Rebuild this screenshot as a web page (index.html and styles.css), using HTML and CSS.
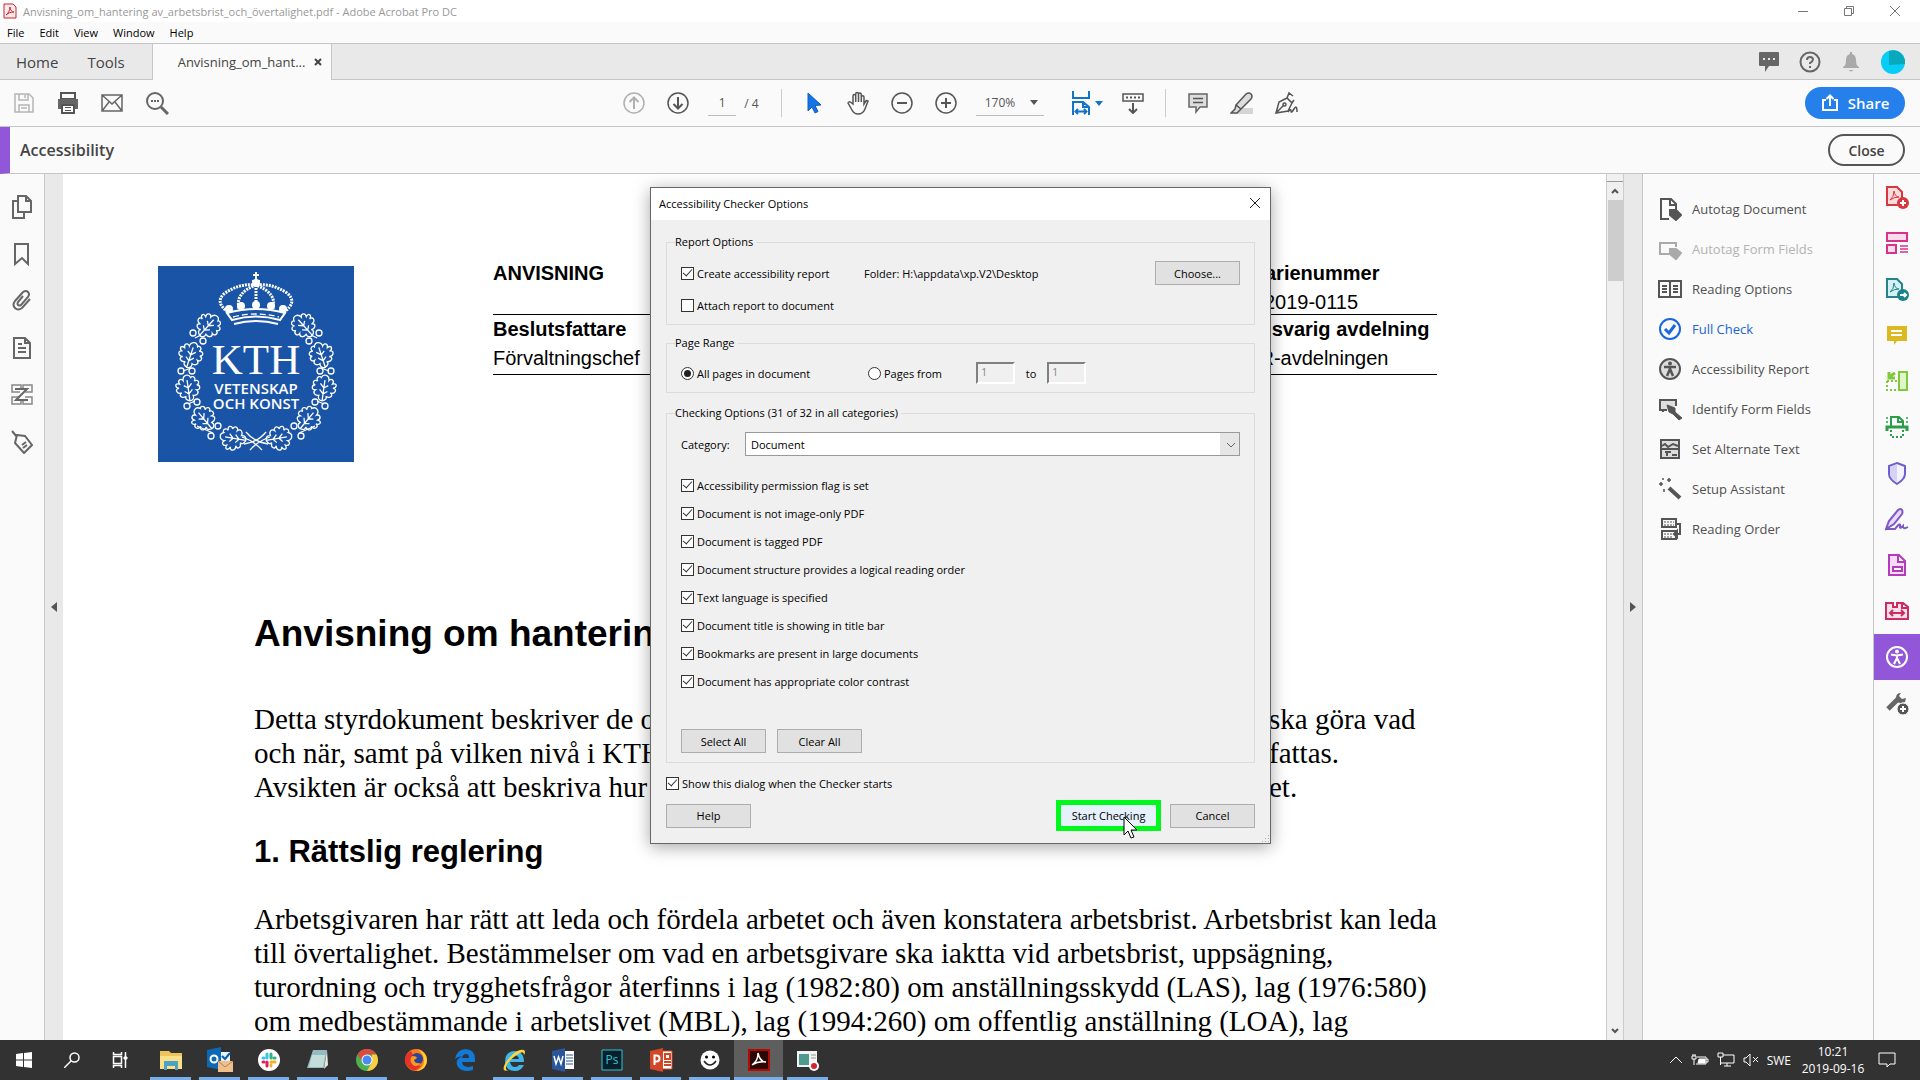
FILE: index.html
```html
<!DOCTYPE html>
<html lang="en">
<head>
    <meta charset="UTF-8">
    <meta name="viewport" content="width=device-width, initial-scale=1.0">
    <title>Anvisning_om_hantering av_arbetsbrist_och_övertalighet.pdf - Adobe Acrobat Pro DC</title>
    <link rel="stylesheet" href="styles.css">
</head>
<body>
    <!-- title bar -->
    <header class="title-bar">
        <svg class="app-icon" width="14" height="16" viewBox="0 0 14 16"><path d="M1 1h9l3 3v11H1z" fill="#fbeaea" stroke="#c9252d"/><path d="M3 12c2-1 4-5 4-8 0 3 2 5 4 5-3 0-6 1-8 3z" fill="none" stroke="#c9252d"/></svg>
        <span class="window-title">Anvisning_om_hantering av_arbetsbrist_och_övertalighet.pdf - Adobe Acrobat Pro DC</span>
        <div class="window-buttons">
            <button aria-label="Minimize"><svg width="12" height="12" viewBox="0 0 12 12"><path d="M1 6.500h10"/></svg></button>
            <button aria-label="Restore"><svg width="12" height="12" viewBox="0 0 12 12"><path d="M1.500 3.500h7v7h-7zM3.500 3.500v-2h7v7h-2"/></svg></button>
            <button aria-label="Close window"><svg width="12" height="12" viewBox="0 0 12 12"><path d="M1 1l10 10M11 1L1 11"/></svg></button>
        </div>
    </header>

    <nav class="menu-bar">
        <a href="#">File</a>
        <a href="#">Edit</a>
        <a href="#">View</a>
        <a href="#">Window</a>
        <a href="#">Help</a>
    </nav>

    <!-- tabs -->
    <div class="tab-bar">
        <a class="tab" href="#">Home</a>
        <a class="tab tab-tools" href="#">Tools</a>
        <div class="tab-active">
            <span>Anvisning_om_hant...</span>
            <button aria-label="Close tab"><svg width="8" height="8" viewBox="0 0 8 8"><path d="M1 1l6 6M7 1L1 7" stroke="#444" stroke-width="2"/></svg></button>
        </div>
        <div class="tab-icons">
            <svg width="22" height="22" viewBox="0 0 22 22"><path d="M2 1h18q1 0 1 1v12q0 1-1 1H11l-4 6v-6H2q-1 0-1-1V2q0-1 1-1z" fill="#666"/><path d="M5 7h2v2H5zM10 7h2v2h-2zM15 7h2v2h-2z" fill="#e9e9e9"/></svg>
            <svg width="22" height="22" viewBox="0 0 22 22" fill="none" stroke="#666" stroke-width="2"><circle cx="11" cy="11" r="9.500"/><path d="M8 9q0-3 3-3t3 2.500q0 1.500-3 3.500v1M11 15v2"/></svg>
            <svg width="22" height="22" viewBox="0 0 22 22"><path d="M3 17h16v-1q-3-1-3-7 0-5-4-6V1h-2v2Q6 4 6 9q0 6-3 7zM9 19h4q-2 3-4 0z" fill="#a9a9a9"/></svg>
            <svg width="24" height="24" viewBox="0 0 24 24"><circle cx="12" cy="12" r="12" fill="#05cdf5"/><path d="M8 15V1q12-3 16 9v4z" fill="#08a9bd"/></svg>
        </div>
    </div>

    <!-- main toolbar -->
    <div class="toolbar">
        <div class="file-tools">
            <button aria-label="Save"><svg width="22" height="22" viewBox="0 0 22 22" fill="none" stroke="#b5b5b5" stroke-width="1.500"><path d="M2 2h14l4 4v14H2zM6 2v6h9V2M12 3v3M6 20v-7h10v7M8 16h6"/></svg></button>
            <button aria-label="Print"><svg width="22" height="22" viewBox="0 0 22 22"><path d="M4 1h14v6H4z" fill="none" stroke="#555" stroke-width="2"/><path d="M1 7h20v10h-3v-4H4v4H1z" fill="#666"/><path d="M5 13h12v8H5z" fill="#fff" stroke="#555" stroke-width="2"/><path d="M8 15.500h6M8 18.500h6" stroke="#555"/></svg></button>
            <button aria-label="Send by email"><svg width="22" height="22" viewBox="0 0 22 22" fill="none" stroke="#666" stroke-width="1.500"><path d="M1 3h20v16H1zM1 3l10 9 10-9M1 19l7-9M21 19l-7-9"/></svg></button>
            <button aria-label="Find"><svg width="24" height="24" viewBox="0 0 24 24" fill="none" stroke="#666" stroke-width="2"><circle cx="10" cy="10" r="8"/><path d="M16 16l7 7" stroke-width="3"/><path d="M6 10h2M9 10h2M12 10h2"/></svg></button>
        </div>
        <div class="page-tools">
            <button aria-label="Previous page"><svg width="22" height="22" viewBox="0 0 22 22" fill="none" stroke="#b0b0b0" stroke-width="1.500"><circle cx="11" cy="11" r="10"/><path d="M11 17V6M6.500 10L11 5.500l4.500 4.500" stroke-width="2"/></svg></button>
            <button aria-label="Next page"><svg width="22" height="22" viewBox="0 0 22 22" fill="none" stroke="#555" stroke-width="1.500"><circle cx="11" cy="11" r="10"/><path d="M11 5v11M6.500 12l4.500 4.500 4.500-4.500" stroke-width="2"/></svg></button>
            <input class="page-input" type="text" value="1" aria-label="Page number">
            <span class="page-total">/ 4</span>
            <i class="divider"></i>
            <button aria-label="Select"><svg width="22" height="22" viewBox="0 0 22 22"><path d="M5 1l13 12-6 .5 3 6-3 1.500-3-6-4 4z" fill="#1473e6" stroke="#1360bd"/></svg></button>
            <button aria-label="Pan"><svg width="24" height="24" viewBox="0 0 24 24" fill="none" stroke="#555" stroke-width="1.500"><path d="M7 13V5q0-1.500 1.300-1.500T9.700 5v6V3q0-1.500 1.400-1.500T12.500 3v8V3.500q0-1.500 1.400-1.500t1.400 1.500V11 6q0-1.300 1.300-1.300T18 6v7l1.500-2.500q1-1.500 2.500-.5L19 18q-2 5-7 5-4 0-6-4l-4-7q1-2 3-.5z"/></svg></button>
            <button aria-label="Zoom out"><svg width="22" height="22" viewBox="0 0 22 22" fill="none" stroke="#555" stroke-width="1.500"><circle cx="11" cy="11" r="10"/><path d="M6 11h10" stroke-width="2"/></svg></button>
            <button aria-label="Zoom in"><svg width="22" height="22" viewBox="0 0 22 22" fill="none" stroke="#555" stroke-width="1.500"><circle cx="11" cy="11" r="10"/><path d="M6 11h10M11 6v10" stroke-width="2"/></svg></button>
            <button class="zoom-value">170% <i class="caret"></i></button>
            <button class="fit-button" aria-label="Fit width"><svg width="18" height="24" viewBox="0 0 18 24" fill="none" stroke="#1473c8" stroke-width="2"><path d="M1 0v7h16V0M1 24V11h10l6 5v8M11 11v5h6M4 20.500h10M6 18l-2.500 2.500L6 23M12 18l2.500 2.500L12 23"/></svg><i class="caret caret-blue"></i></button>
            <button aria-label="Read mode"><svg width="22" height="22" viewBox="0 0 22 22" fill="none" stroke="#555" stroke-width="2"><path d="M1 2h20v7H1z" stroke-width="1.500"/><path d="M4 5.500h14" stroke-dasharray="2 2"/><path d="M11 11v10M7 17l4 4 4-4"/></svg></button>
            <i class="divider"></i>
            <button aria-label="Comment"><svg width="22" height="22" viewBox="0 0 22 22"><path d="M2 2h18v13h-7l-4 5v-5H2z" fill="#ddd" stroke="#666" stroke-width="1.500"/><path d="M6 6.500h10M6 10.500h10" stroke="#555" stroke-width="1.500"/></svg></button>
            <button aria-label="Highlight"><svg width="24" height="24" viewBox="0 0 24 24"><path d="M9 17h14v6H5z" fill="#d5d5d5"/><path d="M6 14L16 3q3-2 5 0t0 5L11 18zM6 14l-1 4-4 4h6l4-4" fill="#ddd" stroke="#555" stroke-width="1.500"/></svg></button>
            <button aria-label="Sign"><svg width="24" height="24" viewBox="0 0 24 24" fill="none" stroke="#555" stroke-width="1.500"><path d="M2 22l3-11 8-4 5 5-4 8zM2 22l8-8M13 7l2-5 4 3M18 12l2-3M14 21q3-4 3-1t3-2 3 3"/><circle cx="10.500" cy="13.500" r="1.500"/></svg></button>
        </div>
        <button class="share-button"><svg width="18" height="18" viewBox="0 0 18 18" fill="none" stroke="#fff" stroke-width="2"><path d="M5 6H2v10h14V6h-3M9 12V2M5.500 5L9 1.500 12.500 5"/></svg>Share</button>
    </div>

    <div class="tool-header">
        <h3>Accessibility</h3>
        <button class="close-button">Close</button>
    </div>

    <div class="workspace">
        <aside class="left-rail">
            <svg width="22" height="24" viewBox="0 0 22 24"><path d="M7 1h8l5 5v11H7zM15 1v5h5M7 6H2v17h11v-6"/></svg>
            <svg width="22" height="24" viewBox="0 0 22 24"><path d="M4 2h13v20l-6-6-7 6z"/></svg>
            <svg width="22" height="24" viewBox="0 0 22 24"><path d="M19 10l-8 9q-4 3-7 0t0-7l8-9q3-2 5 0t0 5l-7 8q-2 1-3 0t0-3l5-6"/></svg>
            <svg width="22" height="24" viewBox="0 0 22 24"><path d="M3 2h11l5 5v15H3zM14 2v5h5M7 8h4M7 12h8M7 16h8"/></svg>
            <svg width="22" height="24" viewBox="0 0 22 24"><path d="M9 9H1V2h9v3M12 5V2h9v7h-7M9 14H1v7h9v-3M12 18v3h9v-7h-7" stroke="#888" stroke-width="1.500"/><path d="M4 6h12L5 17h12"/></svg>
            <svg width="22" height="24" viewBox="0 0 22 24"><path d="M6 5l8 1 7 9-8 8-9-10zM6 7L1 1M11 15l4-3M12 18l4-3"/></svg>
        </aside>
        <div class="strip"><i class="arrow-left"></i></div>

        <!-- the pdf page -->
        <article class="page">
            <div class="page-head">
                <svg class="kth-logo" width="196" height="196" viewBox="0 0 196 196">
                    <defs>
                        <g id="leaf">
                            <path d="M0 14C-3 13-5 11-3 9c-5 2-8-2-4-4-5 1-7-5-2-5-4-1-4-6 1-4-2-4 2-6 4-3 0-5 6-7 8-2 1-2 6 0 3 4 4-2 6 3 2 4 4 1 3 6-1 5 3 3 0 6-4 5 1 3-1 5-4 5z"/>
                            <path d="M0 14V-7M0 7l-4-3M0 7l4-4M0 1l-4-3M0 1l4-4"/>
                        </g>
                        <g id="half">
                            <use href="#leaf" transform="translate(51 59) rotate(42)"/>
                            <use href="#leaf" transform="translate(33 88) rotate(18)"/>
                            <use href="#leaf" transform="translate(30 121) rotate(-8)"/>
                            <use href="#leaf" transform="translate(45 152) rotate(-40)"/>
                            <use href="#leaf" transform="translate(74 172) rotate(-80)"/>
                            <path d="M86 178q14-2 22-12M84 171q12 4 20 13M39 160l16 7M30 138l7-3M25 105l8-3M37 72l6-3"/>
                            <circle cx="35" cy="67" r="3"/><circle cx="45" cy="75" r="3"/><circle cx="23" cy="105" r="3"/><circle cx="34" cy="105" r="3"/>
                            <circle cx="29" cy="140" r="3"/><circle cx="39" cy="136" r="3"/><circle cx="53" cy="170" r="3"/><circle cx="60" cy="160" r="3"/>
                        </g>
                    </defs>
                    <rect width="196" height="196" fill="#1954a6"/>
                    <g fill="none" stroke="#fff" stroke-width="1.300">
                        <use href="#half"/>
                        <use href="#half" transform="translate(196 0) scale(-1 1)"/>
                        <path d="M98 6v12M95 9h6M94 15h8" stroke-width="2"/>
                        <path d="M70 46Q56 36 67 27q15-10 31-8 16-2 31 8 11 9-3 19" stroke-width="3" stroke-dasharray="2 1"/>
                        <path d="M81 42q-4-15 17-23 21 8 17 23M98 19v22" stroke-width="3" stroke-dasharray="2 1"/>
                        <path d="M69 47q29-8 58 0l-5 7q-24-7-48 0zM76 58q22-6 44 0" stroke-width="2"/>
                        <path d="M75 51q23-6 46 0" stroke-dasharray="6 3"/>
                    </g>
                    <g fill="#fff"><circle cx="71" cy="43" r="4"/><circle cx="83" cy="40" r="4"/><circle cx="98" cy="39" r="4"/><circle cx="113" cy="40" r="4"/><circle cx="125" cy="43" r="4"/><circle cx="98" cy="17" r="4"/></g>
                    <text class="logo-kth" x="98" y="108">KTH</text>
                    <text class="logo-text" x="98" y="128">VETENSKAP</text>
                    <text class="logo-text" x="98" y="143">OCH KONST</text>
                </svg>
                <div class="doc-table">
                    <div class="doc-row">
                        <div><b>ANVISNING</b></div>
                        <div><b>Diarienummer</b><br>V-2019-0115</div>
                    </div>
                    <div class="doc-row">
                        <div><b>Beslutsfattare</b><br>Förvaltningschef</div>
                        <div><b>Ansvarig avdelning</b><br>HR-avdelningen</div>
                    </div>
                </div>
            </div>
            <div class="page-text">
                <h1>Anvisning om hantering</h1>
                <p class="intro">
                    <span>Detta styrdokument beskriver de o</span><span>ska göra vad</span>
                    <span>och när, samt på vilken nivå i KTH</span><span>fattas.</span>
                    <span>Avsikten är också att beskriva hur K</span><span>et.</span>
                </p>
                <h2>1. Rättslig reglering</h2>
                <p>Arbetsgivaren har rätt att leda och fördela arbetet och även konstatera arbetsbrist. Arbetsbrist kan leda<br>
                till övertalighet. Bestämmelser om vad en arbetsgivare ska iaktta vid arbetsbrist, uppsägning,<br>
                turordning och trygghetsfrågor återfinns i lag (1982:80) om anställningsskydd (LAS), lag (1976:580)<br>
                om medbestämmande i arbetslivet (MBL), lag (1994:260) om offentlig anställning (LOA), lag</p>
            </div>
        </article>

        <div class="scrollbar">
            <div class="split-box"></div>
            <svg width="16" height="18" viewBox="0 0 16 18"><path d="M5 11l3-3 3 3"/></svg>
            <div class="thumb"></div>
            <svg class="scroll-down" width="16" height="18" viewBox="0 0 16 18"><path d="M5 7l3 3 3-3"/></svg>
        </div>
        <div class="strip"><i class="arrow-right"></i></div>

        <aside class="tool-panel">
            <a href="#"><svg width="24" height="24" viewBox="0 0 24 24"><path d="M11 22H3V2h10l5 5v6M12 2v6h6"/><path d="M12 13h6l5 5-5 5-6-5z" fill="#555"/></svg>Autotag Document</a>
            <a href="#" class="disabled"><svg width="24" height="24" viewBox="0 0 24 24"><path d="M11 17H2V6h16v4"/><path d="M12 12h6l5 4-5 6-6-5z" fill="#aaa"/></svg>Autotag Form Fields</a>
            <a href="#"><svg width="24" height="24" viewBox="0 0 24 24"><path d="M1 4h10l1 1 1-1h10v16H1zM12 5v15M4 9h5M4 12h5M4 15h5M15 9h5M15 12h5M15 15h5"/></svg>Reading Options</a>
            <a href="#" class="current"><svg width="24" height="24" viewBox="0 0 24 24"><circle cx="12" cy="12" r="10"/><path d="M7 12l4 4 6-8" stroke-width="3"/></svg>Full Check</a>
            <a href="#"><svg width="24" height="24" viewBox="0 0 24 24"><circle cx="12" cy="12" r="10" fill="#ddd"/><circle cx="12" cy="6.500" r="2" fill="#555" stroke="none"/><path d="M6 10h12M12 10v5M9 19l3-7 3 7" stroke-width="2.500"/></svg>Accessibility Report</a>
            <a href="#"><svg width="24" height="24" viewBox="0 0 24 24"><path d="M9 13H2V3h16v6M5 13v2" fill="#ddd"/><path d="M9 8l8 3v4l7 6-3 2-6-6-4-2z" fill="#555" stroke-width="1"/></svg>Identify Form Fields</a>
            <a href="#"><svg width="24" height="24" viewBox="0 0 24 24"><path d="M3 3h18v18H3z" fill="#ddd"/><path d="M3 12h18M4 9l3-2 3 3 5-3 5 2"/><path d="M7 15h6M9 14v5M14 18h5"/></svg>Set Alternate Text</a>
            <a href="#"><svg width="24" height="24" viewBox="0 0 24 24"><path d="M11 11l11 10" stroke-width="4"/><path d="M11 1v4M9 3h4M3 5v4M1 7h4M5 1v2M6 12v3" stroke-width="1.500"/></svg>Setup Assistant</a>
            <a href="#"><svg width="24" height="24" viewBox="0 0 24 24"><path d="M4 2h14v8H4zM4 14h14v8H4z"/><path d="M6 5h10M6 8h10M6 17h10M6 20h8" stroke-width="1" stroke-dasharray="2 1"/><path d="M19 7h3v10h-2M16 17l3-3v6z"/></svg>Reading Order</a>
        </aside>

        <aside class="right-rail">
            <button aria-label="Create PDF"><svg width="24" height="24" viewBox="0 0 24 24" stroke="#d7373f"><path d="M2 2h10l5 5v13H2z" fill="#fbdcdd"/><path d="M5 15q4-3 4-9 1 6 5 6-5 0-9 3z" stroke-width="1"/><circle cx="18" cy="18" r="6" fill="#d7373f" stroke="none"/><path d="M15 18h6M18 15v6" stroke="#fff"/></svg></button>
            <button aria-label="Combine"><svg width="24" height="24" viewBox="0 0 24 24" stroke="#d8338c"><path d="M2 2h20v8H2zM2 14h9v8H2z" fill="#fadcec"/><path d="M15 15h8M15 18h8M15 21h8" stroke-width="1.500"/></svg></button>
            <button aria-label="Export PDF"><svg width="24" height="24" viewBox="0 0 24 24" stroke="#26838b"><path d="M2 2h10l5 5v13H2z" fill="#d3f1f2"/><path d="M5 15q4-3 4-9 1 6 5 6-5 0-9 3z" stroke-width="1"/><circle cx="18" cy="18" r="6" fill="#1b8288" stroke="none"/><path d="M15 18h6M19 16l2 2-2 2" stroke="#fff"/></svg></button>
            <button aria-label="Comment tools"><svg width="24" height="24" viewBox="0 0 24 24"><path d="M2 3h20v15H12l-3 4v-4H2z" fill="#dcb921"/><path d="M6 8h11M6 12h11" stroke="#fff"/></svg></button>
            <button aria-label="Organize Pages"><svg width="24" height="24" viewBox="0 0 24 24" stroke="#80c93c"><path d="M14 3h8v18h-8z" fill="#e0f6ca"/><path d="M2 12h10M2 12v9h10" stroke-dasharray="2 2"/><path d="M10 4L4 8M4 3v6h6" stroke-width="3"/></svg></button>
            <button aria-label="Scan"><svg width="24" height="24" viewBox="0 0 24 24" stroke="#2d9d4a"><path d="M6 11V2h8l4 4v5M13 2v5h5"/><path d="M2 16v-4h20v4" stroke-width="3"/><path d="M6 15v7h12v-7" stroke-dasharray="2 2"/><path d="M2 2v2M22 2v2M1 7h2M21 7h2" stroke-width="1.500"/></svg></button>
            <button aria-label="Protect"><svg width="24" height="24" viewBox="0 0 24 24" stroke="#6c5fd0"><path d="M12 2l8 3v8q0 5-8 10-8-5-8-10V5z" fill="#f3f2ff"/><path d="M12 3v18q-7-4-7-8V6z" fill="#d6d1f6" stroke="none"/></svg></button>
            <button aria-label="Fill and Sign"><svg width="24" height="24" viewBox="0 0 24 24" stroke="#7e58c4"><path d="M1 22l3-8L13 3q3-2 4 0t0 4L9 17z" fill="#ead9fb"/><path d="M1 22h9q6-8 5-2 0 2 3-1 0 4 5 1"/></svg></button>
            <button aria-label="Prepare Form"><svg width="24" height="24" viewBox="0 0 24 24" stroke="#b53bbd"><path d="M4 2h10l6 6v14H4zM13 2v7h7" fill="#f9dcfa"/><path d="M8 14h9v4H8z" fill="#fff"/></svg></button>
            <button aria-label="Optimize"><svg width="24" height="24" viewBox="0 0 24 24" stroke="#cd2b64"><path d="M1 4h7v4h4V4h6l5 4v12H1zM17 4v5h6" fill="#fde0ea"/><path d="M5 14h14M8 11l-3 3 3 3M16 11l3 3-3 3"/></svg></button>
            <button class="selected" aria-label="Accessibility"><svg width="24" height="24" viewBox="0 0 24 24" stroke="#fff"><circle cx="12" cy="12" r="10"/><circle cx="12" cy="6.500" r="2" fill="#fff" stroke="none"/><path d="M6 9.500l6 1 6-1M12 10v5M9 19l3-6 3 6"/></svg></button>
            <button aria-label="More Tools"><svg width="24" height="24" viewBox="0 0 24 24"><path d="M3 18L13 8" stroke="#666" stroke-width="5"/><path d="M16 2q-5 0-5 5t5 5l4-1 1-4-4 1-3-3z" fill="#666"/><circle cx="18" cy="18" r="6" fill="#555" stroke="#fafafa" stroke-width="1"/><path d="M15 18h6M18 15v6" stroke="#fff"/></svg></button>
        </aside>
    </div>

    <!-- dialog -->
    <form class="dialog" onsubmit="return false">
        <div class="dialog-title">
            <span>Accessibility Checker Options</span>
            <button aria-label="Close dialog"><svg width="12" height="12" viewBox="0 0 12 12"><path d="M1 1l10 10M11 1L1 11" stroke="#222"/></svg></button>
        </div>
        <div class="dialog-body">
            <fieldset class="report">
                <legend>Report Options</legend>
                <div class="row">
                    <label class="create"><input type="checkbox" checked>Create accessibility report</label>
                    <span>Folder: H:\appdata\xp.V2\Desktop</span>
                    <button class="btn choose">Choose...</button>
                </div>
                <label><input type="checkbox">Attach report to document</label>
            </fieldset>
            <fieldset class="range">
                <legend>Page Range</legend>
                <div class="row">
                    <label class="all-pages"><input type="radio" name="range" checked>All pages in document</label>
                    <label class="pages-from"><input type="radio" name="range">Pages from</label>
                    <input class="page-box" type="text" value="1" aria-label="From page" disabled>
                    <label class="to" for="to-page">to</label>
                    <input class="page-box" id="to-page" type="text" value="1" disabled>
                </div>
            </fieldset>
            <fieldset class="checking">
                <legend>Checking Options (31 of 32 in all categories)</legend>
                <div class="category">
                    <label for="category">Category:</label>
                    <div class="select-box">
                        <select id="category"><option>Document</option></select>
                        <svg width="10" height="6" viewBox="0 0 10 6"><path d="M1 1l4 4 4-4" fill="none" stroke="#666"/></svg>
                    </div>
                </div>
                <div class="checks">
                    <label><input type="checkbox" checked>Accessibility permission flag is set</label>
                    <label><input type="checkbox" checked>Document is not image-only PDF</label>
                    <label><input type="checkbox" checked>Document is tagged PDF</label>
                    <label><input type="checkbox" checked>Document structure provides a logical reading order</label>
                    <label><input type="checkbox" checked>Text language is specified</label>
                    <label><input type="checkbox" checked>Document title is showing in title bar</label>
                    <label><input type="checkbox" checked>Bookmarks are present in large documents</label>
                    <label><input type="checkbox" checked>Document has appropriate color contrast</label>
                </div>
                <div class="select-buttons">
                    <button class="btn">Select All</button>
                    <button class="btn">Clear All</button>
                </div>
            </fieldset>
            <label class="show-dialog"><input type="checkbox" checked>Show this dialog when the Checker starts</label>
            <div class="dialog-buttons">
                <button class="btn">Help</button>
                <button class="btn start">Start Checking
                    <svg class="cursor" width="16" height="24" viewBox="0 0 16 24"><path d="M1 1v18l4-4 3 7 3-1-3-7h6z" fill="#fff" stroke="#000"/></svg>
                </button>
                <button class="btn">Cancel</button>
            </div>
        </div>
        <i class="grip"></i>
    </form>

    <!-- windows taskbar -->
    <footer class="taskbar">
        <div class="system">
            <button aria-label="Start"><svg width="16" height="16" viewBox="0 0 16 16" fill="#fff"><path d="M0 2l7-1v6.500H0zM8 1l8-1v7.500H8zM0 8.500h7V15l-7-1zM8 8.500h8V16l-8-1z"/></svg></button>
            <button aria-label="Search"><svg width="16" height="16" viewBox="0 0 16 16" fill="none" stroke="#fff" stroke-width="1.500"><circle cx="10.500" cy="5.500" r="4.500"/><path d="M7 9l-7 7"/></svg></button>
            <button aria-label="Task view"><svg width="16" height="16" viewBox="0 0 16 16" fill="none" stroke="#fff"><path d="M1.500 4.500h8v7h-8zM1.500 0v2.500h8V0M1.500 16v-2.500h8V16M13.500 0v16" stroke-width="1.500"/><path d="M12 5h3v2h-3z" fill="#fff"/></svg></button>
        </div>
        <div class="apps">
            <button class="open" aria-label="File Explorer"><svg width="24" height="24" viewBox="0 0 24 24"><path d="M1 3h9l2 2h11v16H1z" fill="#eec55c"/><path d="M1 8h22v13H1z" fill="#fbe08a"/><path d="M5 13h14v9h-3v-4H8v4H5z" fill="#4aa3c4"/></svg></button>
            <button class="open" aria-label="Outlook"><svg width="26" height="26" viewBox="0 0 26 26"><path d="M13 5h10v10H13z" fill="#e8f2fb"/><path d="M15 9l3 3 5-6" stroke="#0a5fa8" stroke-width="2" fill="none"/><path d="M0 3l14-3v23L0 20z" fill="#0a68b4"/><circle cx="7" cy="12" r="3.500" fill="none" stroke="#fff" stroke-width="2"/><path d="M11 14h15v11H11z" fill="#eec08c"/><path d="M11 14l7 6 8-6" fill="none" stroke="#b98247"/></svg></button>
            <button class="open" aria-label="Slack"><svg width="24" height="24" viewBox="0 0 24 24" stroke-width="3" stroke-linecap="round"><circle cx="12" cy="12" r="11" fill="#fff"/><path d="M10 6v4M6 10h1" stroke="#36c5f0"/><path d="M14 6v4M17 10h1" stroke="#2eb67d"/><path d="M14 14h4M14 17v1" stroke="#ecb22e"/><path d="M10 14v4M6 14h1" stroke="#e01e5a"/></svg></button>
            <button class="open" aria-label="Notepad"><svg width="24" height="24" viewBox="0 0 24 24"><path d="M7 2h14l-3 18H1z" fill="#94bcc0"/><path d="M6 7h13l-2 12H3z" fill="#c4dcda"/><path d="M21 2l1 15-4 4z" fill="#e8e8e0"/></svg></button>
            <button class="open" aria-label="Chrome"><svg width="24" height="24" viewBox="0 0 24 24"><circle cx="12" cy="12" r="11" fill="#4caf50"/><path d="M2.500 6.500Q6 1 12 1t9.500 5.500H12L8 15z" fill="#dd4b3e"/><path d="M21.500 6.500q3 6 0 11T12 23l5-9V6.500z" fill="#fccd42"/><circle cx="12" cy="12" r="5.500" fill="#fff"/><circle cx="12" cy="12" r="4.500" fill="#4a8af4"/></svg></button>
            <button aria-label="Firefox"><svg width="24" height="24" viewBox="0 0 24 24"><circle cx="12" cy="12" r="11" fill="#ff7a1a"/><path d="M13 1q10 3 10 11 0 10-11 11 8-3 8-10 0-8-7-12z" fill="#ffcf33"/><path d="M1 10Q4 3 7 3l2 4q-4 5 0 9l8 2Q10 26 4 19 0 15 1 10z" fill="#e6332a"/><circle cx="13" cy="11" r="6" fill="#28459b"/><path d="M8 8q5 0 5 2l-3 2q1 4 7 3-5 6-9 1-3-4 0-8z" fill="#ff9a1e"/></svg></button>
            <button aria-label="Edge"><svg width="24" height="24" viewBox="0 0 24 24"><path d="M2 11Q4 1 13 1q9 1 9 10v3H9q1 7 11 4v4Q10 25 5 19q-4-7 4-11-5 1-7 3zM9 10h7q0-4-3-4-3 0-4 4z" fill="#1179d7"/></svg></button>
            <button class="open" aria-label="Internet Explorer"><svg width="24" height="24" viewBox="0 0 24 24"><path d="M12 3q10 0 10 11H8q1 5 5 5 3 0 4-2h5q-3 6-9 6-9 0-10-9Q3 4 12 3zM8 11h9q-1-4-5-4-3 0-4 4z" fill="#3fb6e8"/><path d="M2 22Q0 18 8 9T22 2q2 2 0 5 0-4-4-2Q3 14 4 21q1 2 4 0-4 3-6 1z" fill="#fbd445"/></svg></button>
            <button class="open" aria-label="Word"><svg width="24" height="24" viewBox="0 0 24 24"><path d="M13 3h10v18H13z" fill="#fff"/><path d="M15 7h7M15 10h7M15 13h7M15 16h7" stroke="#2b579a" stroke-width="1"/><path d="M1 3l13-3v24L1 21z" fill="#2b579a"/><path d="M3 8l2 8 2.500-7L10 16l2-8" fill="none" stroke="#fff" stroke-width="1.500"/></svg></button>
            <button class="open" aria-label="Photoshop"><svg width="24" height="24" viewBox="0 0 24 24"><path d="M2 2h20v20H2z" fill="#06202b" stroke="#2fc3d6"/><text class="ps" x="12" y="16">Ps</text></svg></button>
            <button class="open" aria-label="PowerPoint"><svg width="24" height="24" viewBox="0 0 24 24"><path d="M13 3h10v18H13z" fill="#fff" stroke="#d24726"/><path d="M16 6h5v5h-5zM15 14h7M15 17h7" stroke="#d24726" stroke-width="2" fill="none"/><path d="M1 3l13-3v24L1 21z" fill="#d24726"/><path d="M5.500 17V7.500h2q3 0 3 3t-3 3h-2" fill="none" stroke="#fff" stroke-width="2"/></svg></button>
            <button class="open" aria-label="Smiley"><svg width="22" height="22" viewBox="0 0 22 22"><circle cx="11" cy="11" r="9.500" fill="#fff"/><circle cx="7.500" cy="8" r="1.500"/><circle cx="14.500" cy="8" r="1.500"/><path d="M5 12q6 8 12 0" fill="none" stroke="#222" stroke-width="1.500"/></svg></button>
            <button class="open focused" aria-label="Acrobat"><svg width="22" height="22" viewBox="0 0 22 22"><path d="M1 1h20v20H1z" fill="#2d0708" stroke="#b30b00" stroke-width="2"/><path d="M4 16q6-4 6-12 2 9 8 9-8-1-14 3z" fill="none" stroke="#fff" stroke-width="1.500"/></svg></button>
            <button class="open" aria-label="Screen recorder"><svg width="24" height="24" viewBox="0 0 24 24"><path d="M1 3h20v16H1z" fill="#f3f3f3"/><path d="M3 6h10v11H3z" fill="#4c9a90"/><path d="M15 7h5M15 10h5" stroke="#999"/><circle cx="18" cy="18" r="5" fill="#fff"/><circle cx="18" cy="18" r="3" fill="#d3232c"/></svg></button>
        </div>
        <div class="tray">
            <svg width="14" height="10" viewBox="0 0 14 10"><path d="M1 8l6-6 6 6"/></svg>
            <svg width="18" height="14" viewBox="0 0 18 14"><path d="M6 4h9v7H5M15 6h2v3h-2M1 3h4v3H1zM3 6v6M2 1v2M4 1v2"/><path d="M8 6h6v4H7z" fill="#fff"/></svg>
            <svg width="18" height="16" viewBox="0 0 18 16"><path d="M6 3h11v8H4M10 11v3M7 14h7M1 1h5v4H1zM3.500 5v8"/></svg>
            <svg width="16" height="14" viewBox="0 0 16 14"><path d="M1 5h2l4-4v12L3 9H1zM10 4l5 5M15 4l-5 5"/></svg>
            <span class="lang">SWE</span>
            <div class="clock"><span>10:21</span><span>2019-09-16</span></div>
            <svg class="notice" width="18" height="18" viewBox="0 0 18 18"><path d="M1 2h16v11h-5l-3 3v-3H1z"/></svg>
        </div>
    </footer>
</body>
</html>
```
FILE: styles.css
```css
* {
    box-sizing: border-box;
}
body {
    margin: 0;
    height: 100vh;
    display: flex;
    flex-direction: column;
    overflow: hidden;
    position: relative;
    background-color: #fafafa;
    color: #000;
    font-family: "Open Sans", "Noto Sans", sans-serif;
    font-size: 11px;
}
button {
    border: none;
    background: none;
    padding: 0;
    font-family: inherit;
    font-size: inherit;
    color: inherit;
}
a {
    color: inherit;
    text-decoration: none;
}
svg {
    display: block;
    flex-shrink: 0;
}

/* title bar and menu */
.title-bar {
    height: 22px;
    display: flex;
    align-items: center;
    padding-left: 3px;
    padding-right: 2px;
    background-color: #fff;
    color: #999;
    font-size: 11px;
}
.window-title {
    margin-left: 6px;
}
.window-buttons {
    margin-left: auto;
    display: flex;
}
.window-buttons button {
    width: 46px;
    height: 22px;
    display: flex;
    align-items: center;
    justify-content: center;
}
.window-buttons svg {
    fill: none;
    stroke: #777;
}
.menu-bar {
    height: 21px;
    display: flex;
    align-items: center;
    gap: 15px;
    padding-left: 7px;
    font-size: 11px;
}

/* tabs */
.tab-bar {
    height: 37px;
    display: flex;
    align-items: stretch;
    background-color: #e9e9e9;
    border-top: 1px solid #c6c6c6;
    border-bottom: 1px solid #c6c6c6;
    color: #444;
}
.tab {
    padding-left: 16px;
    display: flex;
    align-items: center;
    font-size: 15px;
}
.tab-tools {
    padding-left: 29px;
    padding-right: 27px;
}
.tab-active {
    width: 180px;
    margin-bottom: -1px;
    padding: 0 9px 0 25px;
    display: flex;
    align-items: center;
    justify-content: space-between;
    background-color: #fafafa;
    border-left: 1px solid #c6c6c6;
    border-right: 1px solid #c6c6c6;
    font-size: 13px;
}
.tab-icons {
    margin-left: auto;
    margin-right: 15px;
    display: flex;
    align-items: center;
    gap: 19px;
}

/* toolbar */
.toolbar {
    height: 47px;
    display: grid;
    grid-template-columns: 1fr auto 1fr;
    align-items: center;
    border-bottom: 1px solid #c6c6c6;
}
.file-tools {
    display: flex;
    gap: 22px;
    padding-left: 13px;
}
.page-tools {
    display: flex;
    align-items: center;
    color: #555;
    font-size: 12px;
}
.page-tools button {
    width: 44px;
    height: 28px;
    display: flex;
    align-items: center;
    justify-content: center;
}
.page-input {
    width: 28px;
    height: 26px;
    margin-left: 8px;
    border: none;
    border-bottom: 1px solid #bbb;
    background: none;
    text-align: center;
    font-family: inherit;
    font-size: 12px;
    color: #555;
}
.page-total {
    margin-left: 8px;
    margin-right: 12px;
}
.divider {
    width: 1px;
    height: 28px;
    margin: 0 10px;
    background-color: #ccc;
}
.page-tools .zoom-value {
    width: 68px;
    height: 26px;
    margin: 0 20px 0 8px;
    justify-content: space-between;
    padding: 0 6px 0 9px;
    border-bottom: 1px solid #bbb;
}
.page-tools .fit-button {
    width: 47px;
    gap: 5px;
}
.caret {
    border: 4px solid transparent;
    border-top: 5px solid #555;
    border-bottom: none;
}
.caret-blue {
    border-top-color: #1473c8;
}
.share-button {
    justify-self: end;
    margin-right: 15px;
    width: 100px;
    height: 32px;
    display: flex;
    align-items: center;
    justify-content: center;
    gap: 9px;
    border-radius: 16px;
    background-color: #2680eb;
    color: #fff;
    font-size: 15px;
    font-weight: 600;
}
.tool-header {
    height: 47px;
    display: flex;
    align-items: center;
    justify-content: space-between;
    padding: 0 15px 0 10px;
    border-left: 10px solid #9256d9;
    border-bottom: 1px solid #c6c6c6;
    color: #444;
}
.tool-header h3 {
    margin: 0;
    font-size: 16px;
    font-weight: 600;
}
.close-button {
    width: 77px;
    height: 32px;
    border: 2px solid #555;
    border-radius: 16px;
    font-size: 14px;
    font-weight: 600;
}

/* workspace */
.workspace {
    flex: 1;
    min-height: 0;
    display: flex;
}
.left-rail {
    width: 45px;
    padding-top: 21px;
    display: flex;
    flex-direction: column;
    align-items: center;
    gap: 23px;
    border-right: 1px solid #c6c6c6;
}
.left-rail svg {
    fill: none;
    stroke: #666;
    stroke-width: 2;
}
.strip {
    width: 18px;
    display: flex;
    align-items: center;
    justify-content: center;
    background-color: #e9e9e9;
}
.arrow-left, .arrow-right {
    border: 5px solid transparent;
}
.arrow-left {
    border-right: 6px solid #555;
    border-left: none;
}
.arrow-right {
    border-left: 6px solid #555;
    border-right: none;
}

/* pdf page */
.page {
    flex: 1;
    min-width: 0;
    overflow: hidden;
    background-color: #fff;
    padding: 85px 0 0 95px;
}
.page-head {
    display: flex;
    align-items: flex-start;
    gap: 139px;
    font-family: "Liberation Sans", Arial, sans-serif;
    font-size: 20px;
    line-height: 29px;
}
.kth-logo {
    margin-top: 7px;
}
.logo-kth, .logo-text {
    fill: #fff;
    text-anchor: middle;
}
.logo-kth {
    font-family: "Liberation Serif", serif;
    font-size: 43px;
}
.logo-text {
    font-family: "Open Sans", sans-serif;
    font-size: 15px;
    font-weight: 600;
}
.doc-table {
    width: 944px;
}
.doc-row {
    display: grid;
    grid-template-columns: 752px 1fr;
    border-bottom: 1px solid #000;
    height: 60px;
    white-space: nowrap;
}
.doc-row:first-child {
    height: 56px;
}
.page-text {
    padding-left: 96px;
    white-space: nowrap;
}
h1, h2 {
    margin: 0;
    font-family: "Liberation Sans", Arial, sans-serif;
}
h1 {
    margin-top: 150px;
    font-size: 37px;
    line-height: 44px;
}
h2 {
    margin-top: 26px;
    font-size: 31px;
    line-height: 44px;
}
p {
    margin: 0;
    font-family: "Liberation Serif", Georgia, serif;
    font-size: 29px;
    line-height: 34px;
}
h1 + p {
    margin-top: 46px;
}
h2 + p {
    margin-top: 28px;
}
.intro {
    display: grid;
    grid-template-columns: 1015px auto;
}

.scrollbar {
    width: 18px;
    display: flex;
    flex-direction: column;
    align-items: center;
    background-color: #f0f0f0;
    border-left: 1px solid #ccc;
    border-right: 1px solid #ccc;
}
.scrollbar svg {
    fill: none;
    stroke: #555;
    stroke-width: 2;
}
.split-box {
    width: 100%;
    height: 8px;
    border-bottom: 1px solid #999;
}
.thumb {
    width: 15px;
    height: 81px;
    background-color: #cdcdcd;
}
.scroll-down {
    margin-top: auto;
}

/* right side */
.tool-panel {
    width: 231px;
    padding-top: 15px;
    display: flex;
    flex-direction: column;
    border-left: 1px solid #c6c6c6;
    color: #505050;
    font-size: 13px;
}
.tool-panel a {
    height: 40px;
    padding-left: 15px;
    display: flex;
    align-items: center;
    gap: 10px;
}
.tool-panel svg {
    fill: none;
    stroke: #555;
    stroke-width: 2;
}
.tool-panel .disabled {
    color: #b3b3b3;
}
.tool-panel .disabled svg {
    stroke: #aaa;
}
.tool-panel .current {
    color: #2065d0;
}
.tool-panel .current svg {
    stroke: #1867dc;
}
.right-rail {
    width: 47px;
    border-left: 1px solid #c6c6c6;
}
.right-rail button {
    width: 100%;
    height: 46px;
    display: flex;
    align-items: center;
    justify-content: center;
}
.right-rail svg {
    fill: none;
    stroke-width: 2;
}
.right-rail .selected {
    background-color: #9256d9;
}

/* dialog */
.dialog {
    position: absolute;
    top: 187px;
    left: 50%;
    width: 621px;
    margin-left: -310px;
    background-color: #f0f0f0;
    border: 1px solid #666;
    box-shadow: 0 3px 16px rgba(0,0,0,0.35);
    font-size: 11px;
}
.dialog-title {
    height: 32px;
    padding: 0 9px 2px 8px;
    display: flex;
    align-items: center;
    justify-content: space-between;
    background-color: #fff;
}
.dialog-body {
    padding: 14px 15px 12px;
}
fieldset {
    margin: 0;
    padding: 0 14px;
    border: 1px solid #dcdcdc;
    min-width: 0;
}
legend {
    height: 16px;
    margin-left: -6px;
    padding: 0 3px 0 0;
    line-height: 16px;
}
.dialog label {
    display: flex;
    align-items: center;
}
.row {
    display: flex;
    align-items: center;
}
.report {
    height: 91px;
}
.report .row {
    height: 24px;
    margin-top: 11px;
    margin-bottom: 13px;
}
.create {
    width: 183px;
}
.range {
    height: 58px;
    margin-top: 10px;
}
.range .row {
    margin-top: 11px;
}
.all-pages {
    width: 187px;
}
.pages-from {
    width: 108px;
}
.page-box {
    width: 39px;
    height: 22px;
    padding: 0 3px 4px;
    border: 2px solid;
    border-color: #808080 #fff #fff #808080;
    background-color: #f0f0f0;
    color: #888;
    font-family: inherit;
    font-size: 11px;
}
.to {
    width: 32px;
    justify-content: center;
}
input[type="checkbox"], input[type="radio"] {
    appearance: none;
    width: 13px;
    height: 13px;
    margin: 0 3px 0 0;
    border: 1px solid #333;
    background-color: #fff;
    display: flex;
    align-items: center;
    justify-content: center;
}
input[type="radio"] {
    border-radius: 50%;
}
input[type="checkbox"]:checked::after {
    content: "";
    width: 4px;
    height: 8px;
    margin-top: -3px;
    border: solid #333;
    border-width: 0 1px 1px 0;
    transform: rotate(42deg);
}
input[type="radio"]:checked::after {
    content: "";
    width: 7px;
    height: 7px;
    border-radius: 50%;
    background-color: #222;
}
.checking {
    margin-top: 12px;
}
.category {
    margin-top: 11px;
    display: flex;
    align-items: center;
}
.category label {
    width: 64px;
}
.select-box {
    flex: 1;
    position: relative;
}
.select-box svg {
    position: absolute;
    right: 4px;
    top: 10px;
    pointer-events: none;
}
select {
    appearance: none;
    display: block;
    width: 100%;
    height: 24px;
    padding: 0 5px;
    border: 1px solid #999;
    background: linear-gradient(to left, #e6e6e6 19px, #fff 19px);
    font-family: inherit;
    font-size: 11px;
    color: #000;
}
.checks {
    margin-top: 15px;
}
.checks label {
    height: 28px;
}
.btn {
    width: 85px;
    height: 24px;
    border: 1px solid #adadad;
    background-color: #e1e1e1;
}
.choose {
    margin-left: auto;
}
.select-buttons {
    display: flex;
    gap: 11px;
    margin-top: 34px;
    margin-bottom: 9px;
}
.show-dialog {
    height: 20px;
    margin-top: 10px;
}
.dialog-buttons {
    display: flex;
    align-items: center;
    gap: 9px;
    margin-top: 7px;
}
.dialog-buttons .start {
    width: 105px;
    height: 31px;
    margin-left: auto;
    border: 5px solid #00f81c;
    background-color: #e5f1fb;
    position: relative;
    white-space: nowrap;
}
.cursor {
    position: absolute;
    left: 62px;
    top: 11px;
}
.grip {
    position: absolute;
    right: 1px;
    bottom: 1px;
    width: 8px;
    height: 8px;
    background: radial-gradient(#aaa 1px, transparent 1px) 0 0/3px 3px;
    clip-path: polygon(100% 0, 100% 100%, 0 100%);
}

/* taskbar */
.taskbar {
    height: 40px;
    display: flex;
    background-color: #323232;
    color: #fff;
}
.system, .apps {
    display: flex;
}
.system button {
    width: 48px;
    display: flex;
    align-items: center;
    justify-content: center;
}
.apps {
    margin-left: 2px;
}
.apps button {
    width: 49px;
    position: relative;
    display: flex;
    align-items: center;
    justify-content: center;
}
.open::after {
    content: "";
    position: absolute;
    bottom: 0;
    left: 4px;
    right: 4px;
    height: 3px;
    background-color: #76b0ea;
}
.apps .focused {
    background-color: #5e5e5e;
}
.focused::after {
    left: 0;
    right: 0;
}
.ps {
    fill: #2fc3d6;
    text-anchor: middle;
    font-size: 12px;
}
.tray {
    margin-left: auto;
    padding-right: 4px;
    display: flex;
    align-items: center;
    gap: 8px;
    font-size: 12px;
}
.tray svg {
    fill: none;
    stroke: #fff;
}
.clock {
    width: 68px;
    margin-right: 3px;
    display: flex;
    flex-direction: column;
    align-items: center;
    line-height: 17px;
}
.tray .notice {
    margin-right: 20px;
}
```
